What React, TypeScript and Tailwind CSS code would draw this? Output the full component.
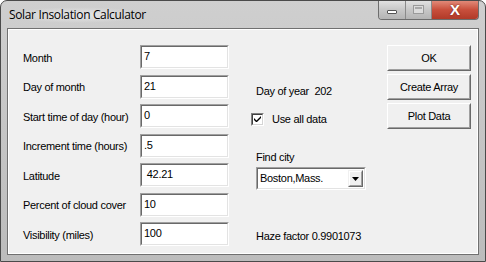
import React from 'react';

const fields = [
  { label: 'Month', value: '7' },
  { label: 'Day of month', value: '21' },
  { label: 'Start time of day (hour)', value: '0' },
  { label: 'Increment time (hours)', value: '.5' },
  { label: 'Latitude', value: ' 42.21' },
  { label: 'Percent of cloud cover', value: '10' },
  { label: 'Visibility (miles)', value: '100' },
];

const Sunken: React.FC<{ className?: string; children?: React.ReactNode }> = ({ className = '', children }) => (
  <div className={`border border-t-[#a0a0a0] border-l-[#a0a0a0] border-b-white border-r-white ${className}`}>
    <div className="h-full w-full border border-t-[#696969] border-l-[#696969] border-b-[#e3e3e3] border-r-[#e3e3e3] bg-white">
      {children}
    </div>
  </div>
);

const Button: React.FC<{ label: string }> = ({ label }) => (
  <div className="h-[26px] w-[84px] border border-t-white border-l-white border-b-[#696969] border-r-[#696969]">
    <div className="flex h-full w-full items-center justify-center border border-t-[#f0f0f0] border-l-[#f0f0f0] border-b-[#a0a0a0] border-r-[#a0a0a0] bg-[#f0f0f0]">
      {label}
    </div>
  </div>
);

export default function App() {
  return (
    <div className="h-[262px] w-[486px] overflow-hidden bg-white font-['Liberation_Sans',Arial,sans-serif]">
      <div className="flex h-full w-full flex-col overflow-hidden rounded-t-[7px] border border-[#4a4a4a] bg-gradient-to-b from-[#cfcfcf] to-[#bcbcbc]">
        {/* title bar */}
        <div className="relative flex h-[27px] shrink-0 items-start">
          <div className="ml-[6px] mt-[6px] rounded-full bg-[radial-gradient(ellipse_at_center,rgba(235,235,235,0.9),rgba(235,235,235,0)_70%)] px-[2px] text-[12px] leading-[16px] text-black font-['Open_Sans',sans-serif] tracking-[-0.35px]">
            Solar Insolation Calculator
          </div>
          <div className="absolute right-[6px] top-[-1px] flex h-[20px] overflow-hidden rounded-b-[4px] border border-t-0 border-[#6d6d6d]">
            <div className="flex w-[27px] items-center justify-center border-r border-[#8a8a8a] bg-gradient-to-b from-[#e4e4e4] via-[#c8c8c8] to-[#b4b4b4]">
              <div className="mt-[5px] h-[4px] w-[10px] rounded-[1px] border border-[#555] bg-white" />
            </div>
            <div className="flex w-[26px] items-center justify-center border-r border-[#8a8a8a] bg-gradient-to-b from-[#e4e4e4] via-[#c8c8c8] to-[#b4b4b4]">
              <div className="h-[9px] w-[11px] border border-[#9a9a9a] bg-[#dcdcdc]">
                <div className="m-[1px] h-[2px] bg-[#a9a9a9]" />
              </div>
            </div>
            <div className="flex w-[46px] items-center justify-center bg-gradient-to-b from-[#e3907f] via-[#c9503d] to-[#b13a28]">
              <span className="text-[15px] font-bold leading-none text-white [text-shadow:0_0_2px_#6a1a10]">X</span>
            </div>
          </div>
        </div>

        {/* body with frame */}
        <div className="flex flex-1 px-[6px] pb-[6px]">
          <div className="flex flex-1 border border-[#707070]">
            <div className="flex flex-1 border border-white bg-[#f0f0f0] text-[11px] tracking-[-0.3px] text-black">
              {/* left column */}
              <div className="flex w-[226px] flex-col gap-[5.5px] pl-[14px] pt-[15px]">
                {fields.map((f) => (
                  <div key={f.label} className="flex h-[24px] items-center">
                    <div className="w-[117px] pt-[2px]">{f.label}</div>
                    <Sunken className="h-[24px] w-[89px]">
                      <div className="whitespace-pre pl-[2px] pt-[3px] leading-[13px]">{f.value}</div>
                    </Sunken>
                  </div>
                ))}
              </div>

              {/* middle column */}
              <div className="flex w-[150px] flex-col pl-[21px]">
                <div className="mt-[55px] whitespace-pre leading-[13px]">Day of year  202</div>
                <div className="ml-[-5px] mt-[15px] flex items-center gap-[8px]">
                  <div className="flex h-[13px] w-[13px] items-center justify-center border border-t-[#808080] border-l-[#808080] border-b-white border-r-white">
                    <div className="flex h-full w-full items-center justify-center border border-t-[#404040] border-l-[#404040] border-b-[#d4d4d4] border-r-[#d4d4d4] bg-white">
                      <svg width="7" height="7" viewBox="0 0 7 7">
                        <path d="M0 2 L0 4 L2 6 L3 6 L7 2 L7 0 L2.5 4.5 Z" fill="#000" />
                      </svg>
                    </div>
                  </div>
                  <span className="leading-[13px]">Use all data</span>
                </div>
                <div className="mt-[25px] leading-[13px]">Find city</div>
                <Sunken className="mt-[3px] h-[23px] w-[110px]">
                  <div className="flex h-full items-center justify-between">
                    <span className="pl-[2px]">Boston,Mass.</span>
                    <div className="mr-[1px] h-[17px] w-[15px] border border-t-[#f0f0f0] border-l-[#f0f0f0] border-b-[#696969] border-r-[#696969]">
                      <div className="flex h-full w-full items-center justify-center border border-t-white border-l-white border-b-[#a0a0a0] border-r-[#a0a0a0] bg-[#f0f0f0]">
                        <svg width="7" height="4" viewBox="0 0 7 4">
                          <path d="M0 0 L7 0 L3.5 4 Z" fill="#000" />
                        </svg>
                      </div>
                    </div>
                  </div>
                </Sunken>
                <div className="mt-[40px] leading-[13px]">Haze factor 0.9901073</div>
              </div>

              {/* buttons */}
              <div className="flex flex-col gap-[3px] pl-[2px] pt-[15px]">
                <Button label="OK" />
                <Button label="Create Array" />
                <Button label="Plot Data" />
              </div>
            </div>
          </div>
        </div>
      </div>
    </div>
  );
}
